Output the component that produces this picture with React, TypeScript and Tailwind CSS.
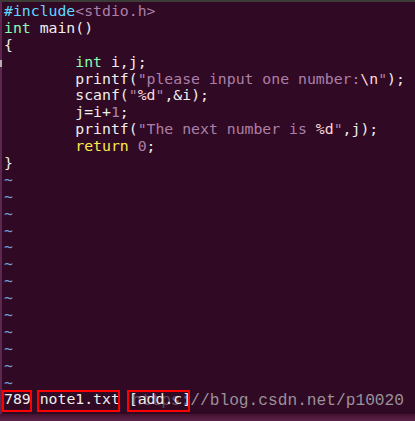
import React from 'react';

const C = {
  pre: 'text-[#5fd7ff]',
  type: 'text-[#87ffaf]',
  str: 'text-[#ad7fa8]',
  stmt: 'text-[#fce94f]',
  spec: 'text-[#ffd7d7]',
  tilde: 'text-[#729fcf]',
};

const T = '        ';

function Line({ children }: { children?: React.ReactNode }) {
  return <div className="h-[16.9px] leading-[16.9px] whitespace-pre">{children}</div>;
}

function Boxed({ children, cls }: { children: React.ReactNode; cls: string }) {
  return (
    <span className="relative">
      {children}
      <span className={`absolute top-[0px] bottom-[-5px] border-2 border-[#ff0000] ${cls}`} />
    </span>
  );
}

export default function App() {
  const tildes = Array.from({ length: 13 });
  return (
    <div className="w-[415px] h-[421px] bg-[#300a24] flex flex-col overflow-hidden relative">
      {/* csdn watermark, sits under the status text */}
      <div
        className="absolute left-[132px] top-[391px] text-[16.2px] leading-[20px] text-[#9a919a] whitespace-pre"
        style={{ fontFamily: '"Liberation Mono", monospace' }}
      >
        <span className="opacity-50">https:</span>//blog.csdn.net/p10020
      </div>
      <div className="h-[2px] bg-[#3c3b37]" />
      <div className="flex flex-1">
        <div className="w-[2px] bg-[#5e2750] relative">
          <div className="absolute top-[58px] h-[7px] w-[2px] bg-[#b8b0b4]" />
        </div>
        <div
          className="flex-1 pl-[2px] pt-[1px] text-[14.8px] text-[#eeeeec]"
          style={{ fontFamily: '"DejaVu Sans Mono", monospace' }}
        >
          <Line>
            <span className={C.pre}>#include</span>
            <span className={C.str}>&lt;stdio.h&gt;</span>
          </Line>
          <Line>
            <span className={C.type}>int</span> main()
          </Line>
          <Line>{'{'}</Line>
          <Line>
            {T}
            <span className={C.type}>int</span> i,j;
          </Line>
          <Line>
            {T}printf(<span className={C.str}>"please input one number:</span>
            <span className={C.spec}>\n</span>
            <span className={C.str}>"</span>);
          </Line>
          <Line>
            {T}scanf(<span className={C.str}>"</span>
            <span className={C.spec}>%d</span>
            <span className={C.str}>"</span>,&amp;i);
          </Line>
          <Line>
            {T}j=i+<span className={C.str}>1</span>;
          </Line>
          <Line>
            {T}printf(<span className={C.str}>"The next number is </span>
            <span className={C.spec}>%d</span>
            <span className={C.str}>"</span>,j);
          </Line>
          <Line>
            {T}
            <span className={C.stmt}>return</span> <span className={C.str}>0</span>;
          </Line>
          <Line>{'}'}</Line>
          {tildes.map((_, i) => (
            <Line key={i}>
              <span className={C.tilde}>~</span>
            </Line>
          ))}
          <Line>
            <Boxed cls="left-[-2px] right-[-1px]">789</Boxed>{' '}
            <Boxed cls="left-[-3px] right-[0px]">note1.txt</Boxed>{' '}
            <Boxed cls="left-[-2px] right-[1px]">[add.c]</Boxed>
          </Line>
        </div>
      </div>
      <div className="h-[7px] bg-gradient-to-b from-[#42122f] to-[#5c2248]" />
    </div>
  );
}
